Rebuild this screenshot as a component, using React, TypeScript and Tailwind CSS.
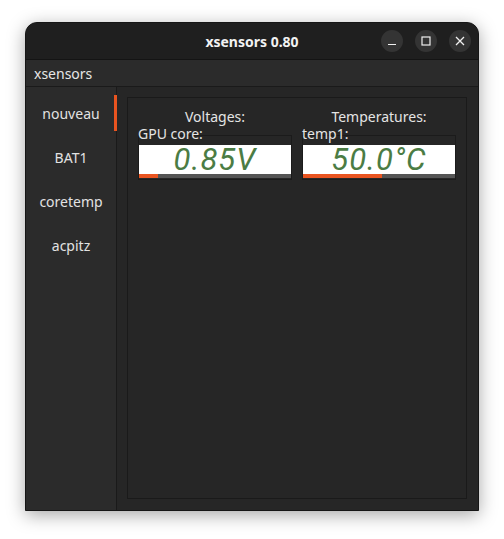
const font = { fontFamily: '"Noto Sans", "Open Sans", sans-serif' };

interface Gauge {
  label: string;
  value: string;
  fill: number; // percent of bar
}

interface Column {
  title: string;
  gauge: Gauge;
}

const columns: Column[] = [
  { title: 'Voltages:', gauge: { label: 'GPU core:', value: '0.85V', fill: 12.5 } },
  { title: 'Temperatures:', gauge: { label: 'temp1:', value: '50.0°C', fill: 52 } },
];

const devices = ['nouveau', 'BAT1', 'coretemp', 'acpitz'];

function GaugeBox({ gauge }: { gauge: Gauge }) {
  return (
    <div className="flex flex-col">
      <div className="h-[14px] leading-[14px] text-[14px] text-[#e4e4e4] relative z-10 whitespace-nowrap">
        {gauge.label}
      </div>
      <div className="mt-[-6px] border border-[#1b1b1b] pt-[9px]">
        <div className="h-[29px] bg-white flex items-center justify-center">
          <span
            className="leading-[29px] text-[31px] font-normal italic text-[#4b7c44] tracking-[1px] whitespace-pre"
            style={{ fontFamily: 'Roboto, "Noto Sans", sans-serif' }}
          >
            {gauge.value}
          </span>
        </div>
        <div className="h-[4px] bg-[#555555] flex">
          <div className="h-full bg-[#e95420]" style={{ width: `${gauge.fill}%` }} />
        </div>
        <div className="h-[1px]" />
      </div>
    </div>
  );
}

export default function App() {
  return (
    <div className="w-[504px] h-[539px] bg-white pt-[22px] pl-[25px]" style={font}>
      <div className="w-[454px] h-[489px] rounded-t-[12px] border border-[#161616] bg-[#262626] flex flex-col overflow-hidden shadow-[0_4px_18px_rgba(0,0,0,0.35)]">
        {/* title bar */}
        <div className="h-[37px] shrink-0 bg-[#1f1f1f] border-b border-[#141414] relative flex items-center justify-center">
          <span className="text-[14px] font-bold text-[#f2f2f2]">xsensors 0.80</span>
          <div className="absolute right-[7px] top-0 h-full flex items-center gap-[12px]">
            <button className="w-[22px] h-[22px] rounded-full bg-[#343434] flex items-center justify-center">
              <svg width="12" height="12" viewBox="0 0 12 12">
                <path d="M2 9.5h8" stroke="#f0f0f0" strokeWidth="1.2" />
              </svg>
            </button>
            <button className="w-[22px] h-[22px] rounded-full bg-[#343434] flex items-center justify-center">
              <svg width="12" height="12" viewBox="0 0 12 12">
                <rect x="2" y="2" width="8" height="8" fill="none" stroke="#f0f0f0" strokeWidth="1.2" />
              </svg>
            </button>
            <button className="w-[22px] h-[22px] rounded-full bg-[#343434] flex items-center justify-center">
              <svg width="12" height="12" viewBox="0 0 12 12">
                <path d="M2 2l8 8M10 2l-8 8" stroke="#f0f0f0" strokeWidth="1.3" />
              </svg>
            </button>
          </div>
        </div>

        {/* menu bar */}
        <div className="h-[27px] shrink-0 bg-[#2b2b2b] border-b border-[#1a1a1a] px-[8px] flex items-center">
          <span className="text-[14px] text-[#e6e6e6]">xsensors</span>
        </div>

        {/* body */}
        <div className="flex-1 flex min-h-0">
          <div className="w-[91px] shrink-0 bg-[#2b2b2b] border-r border-[#1a1a1a] pt-[4px] flex flex-col">
            {devices.map((d, i) => (
              <div key={d} className="h-[44px] relative flex items-center justify-center text-[14px] text-[#e2e2e2]">
                {d}
                {i === 0 && <div className="absolute right-[-1px] top-[4px] bottom-[4px] w-[3px] bg-[#e95420]" />}
              </div>
            ))}
          </div>

          <div className="flex-1 p-[10px] pr-[11px] pb-[11px]">
            <div className="h-full border border-[#1a1a1a] px-[10px] pt-[9px] grid grid-cols-2 gap-x-[10px] content-start">
              {columns.map((c) => (
                <div key={c.title} className="flex flex-col">
                  <div className="h-[20px] leading-[20px] text-[14px] text-[#e4e4e4] text-center">{c.title}</div>
                  <GaugeBox gauge={c.gauge} />
                </div>
              ))}
            </div>
          </div>
        </div>
      </div>
    </div>
  );
}
